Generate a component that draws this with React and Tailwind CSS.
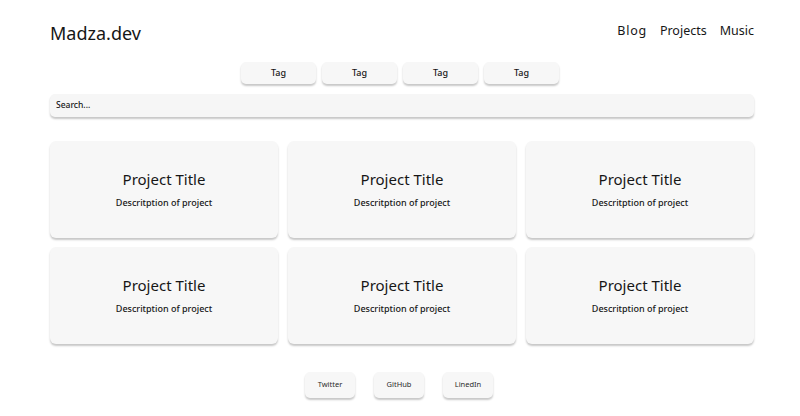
import React from 'react';

const tags = ['Tag', 'Tag', 'Tag', 'Tag'];
const projects = Array.from({ length: 6 }, (_, i) => ({
  id: i,
  title: 'Project Title',
  description: 'Descritption of project',
}));
const socials = ['Twitter', 'GitHub', 'LinedIn'];

const softShadow = 'shadow-[0_2px_2px_rgba(0,0,0,0.22)]';

const App = () => {
  return (
    <div
      className="min-h-[416px] bg-white text-[#161616]"
      style={{ fontFamily: '"Noto Sans", "Open Sans", sans-serif' }}
    >
      <div className="ml-[50px] w-[704px]">
        {/* Header */}
        <header className="flex items-center justify-between pt-[21px] h-[46px]">
          <a className="text-[18px] leading-none -mt-[2px]">Madza.dev</a>
          <nav className="flex items-center gap-[13px] text-[12.5px] -mt-[5px]">
            <a className="tracking-[0.06em]">Blog</a>
            <a>Projects</a>
            <a>Music</a>
          </nav>
        </header>

        {/* Tags */}
        <div className="flex justify-center gap-[6px] mt-[16px] pr-[4px]">
          {tags.map((t, i) => (
            <button
              key={i}
              className={`w-[75px] h-[22px] rounded-[5px] bg-[#f7f7f7] text-[9px] font-medium ${softShadow}`}
            >
              {t}
            </button>
          ))}
        </div>

        {/* Search */}
        <div className={`mt-[10px] h-[23px] rounded-[5px] bg-[#f6f6f6] flex items-center px-[6px] ${softShadow}`}>
          <input
            placeholder="Search..."
            className="w-full bg-transparent outline-none text-[8.5px] font-medium placeholder:text-[#161616]"
          />
        </div>

        {/* Projects */}
        <div className="grid grid-cols-3 gap-x-[10px] gap-y-[9px] mt-[24px]">
          {projects.map((p) => (
            <div
              key={p.id}
              className={`h-[97px] rounded-[6px] bg-[#f7f7f7] flex flex-col items-center pt-[27px] ${softShadow}`}
            >
              <h2 className="text-[15px] leading-[22px]">{p.title}</h2>
              <p className="text-[9px] font-medium mt-[6px]">{p.description}</p>
            </div>
          ))}
        </div>

        {/* Footer */}
        <footer className="flex justify-center gap-[19px] mt-[28px] pr-[6px]">
          {socials.map((s) => (
            <button
              key={s}
              className={`w-[50px] h-[26px] rounded-[5px] bg-[#f7f7f7] text-[7.5px] text-[#2a2a2a] ${softShadow}`}
            >
              {s}
            </button>
          ))}
        </footer>
      </div>
    </div>
  );
};

export default App;
